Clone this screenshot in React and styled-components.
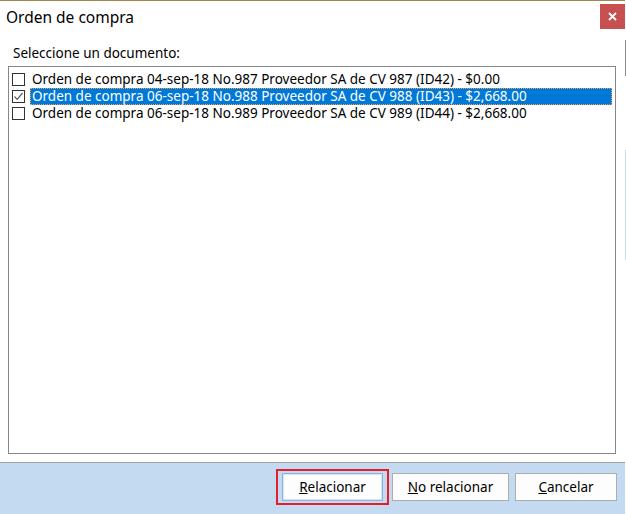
import React from "react";
import styled, { createGlobalStyle } from "styled-components";

const GlobalStyle = createGlobalStyle`
  html, body {
    margin: 0;
    padding: 0;
    background: #ffffff;
  }
  body {
    font-family: "Noto Sans", "Open Sans", "Liberation Sans", sans-serif;
  }
`;

const Screen = styled.div`
  width: 626px;
  height: 514px;
  display: flex;
  overflow: hidden;
`;

const Dialog = styled.div`
  flex: 1;
  display: flex;
  flex-direction: column;
  background: #ffffff;
  border-top: 1px solid #a3874f;
`;

const Behind = styled.div`
  width: 1px;
  background: linear-gradient(
    to bottom,
    #ffffff 0px,
    #ffffff 40px,
    #8a8a8a 40px,
    #8a8a8a 76px,
    #ffffff 76px,
    #ffffff 150px,
    #c9dcef 150px,
    #c9dcef 260px,
    #ffffff 260px
  );
`;

const TitleBar = styled.div`
  height: 32px;
  display: flex;
  align-items: flex-start;
  justify-content: space-between;
`;

const Title = styled.div`
  font-size: 15.5px;
  color: #000000;
  padding: 6px 0 0 6px;
  line-height: 20px;
`;

const CloseButton = styled.div`
  width: 25px;
  height: 25px;
  margin-top: 3px;
  background: #c75050;
  display: flex;
  align-items: center;
  justify-content: center;
`;

const Body = styled.div`
  flex: 1;
  display: flex;
  flex-direction: column;
  padding: 0 9px 8px 8px;
`;

const Label = styled.div`
  font-size: 13.5px;
  line-height: 16px;
  margin: 12px 0 5px 5px;
  color: #000000;
`;

const ListBox = styled.div`
  flex: 1;
  border: 1px solid #828790;
  padding-top: 4px;
  background: #ffffff;
`;

const Row = styled.div`
  height: 17px;
  display: flex;
  align-items: center;
`;

const Box = styled.div`
  width: 13px;
  height: 13px;
  box-sizing: border-box;
  margin: 0 5px 0 3px;
  border: 1px solid #333333;
  background: #ffffff;
  display: flex;
  align-items: center;
  justify-content: center;
`;

const ItemText = styled.div`
  flex: 1;
  height: 17px;
  margin-right: 3px;
  padding-left: 2px;
  font-size: 13.5px;
  line-height: 17px;
  white-space: nowrap;
  color: ${({ $selected }) => ($selected ? "#ffffff" : "#000000")};
  background: ${({ $selected }) => ($selected ? "#0078d7" : "transparent")};
  outline: ${({ $selected }) => ($selected ? "1px dotted #f0a04a" : "none")};
  outline-offset: -1px;
`;

const Footer = styled.div`
  height: 52px;
  box-sizing: border-box;
  border-top: 1px solid #a0a0a0;
  background: #c4daf0;
  display: flex;
  align-items: flex-start;
  justify-content: flex-end;
  gap: 6px;
  padding: 6px 8px 0 0;
`;

const Highlight = styled.div`
  border: 2px solid #e61e2b;
  padding: 2px 4px;
  margin-right: -3px;
`;

const Button = styled.div`
  width: ${({ $w }) => $w}px;
  height: 28px;
  box-sizing: border-box;
  margin-top: ${({ $inset }) => ($inset ? 0 : 4)}px;
  border: 1px solid ${({ $default }) => ($default ? "#86b3e2" : "#adadad")};
  box-shadow: ${({ $default }) => ($default ? "inset 0 0 0 1px #d6e6f7" : "none")};
  background: #fdfdfd;
  display: flex;
  align-items: center;
  justify-content: center;
  font-size: 13.5px;
  color: #000000;
`;

const U = styled.span`
  text-decoration: underline;
`;

const Check = () => (
  <svg width="11" height="11" viewBox="0 0 11 11">
    <path d="M1.5 5.5 L4.2 8.3 L9.5 2" fill="none" stroke="#5a5a5a" strokeWidth="1.2" />
  </svg>
);

const items = [
  { text: "Orden de compra 04-sep-18 No.987 Proveedor SA de CV 987 (ID42) - $0.00", checked: false },
  { text: "Orden de compra 06-sep-18 No.988 Proveedor SA de CV 988 (ID43) - $2,668.00", checked: true },
  { text: "Orden de compra 06-sep-18 No.989 Proveedor SA de CV 989 (ID44) - $2,668.00", checked: false },
];

export default function App() {
  return (
    <>
      <GlobalStyle />
      <Screen>
        <Dialog>
          <TitleBar>
            <Title>Orden de compra</Title>
            <CloseButton>
              <svg width="9" height="9" viewBox="0 0 9 9">
                <path d="M1 1 L8 8 M8 1 L1 8" stroke="#ffffff" strokeWidth="1.8" />
              </svg>
            </CloseButton>
          </TitleBar>
          <Body>
            <Label>Seleccione un documento:</Label>
            <ListBox>
              {items.map((it) => (
                <Row key={it.text}>
                  <Box>{it.checked && <Check />}</Box>
                  <ItemText $selected={it.checked}>{it.text}</ItemText>
                </Row>
              ))}
            </ListBox>
          </Body>
          <Footer>
            <Highlight>
              <Button $w={101} $default $inset>
                <span><U>R</U>elacionar</span>
              </Button>
            </Highlight>
            <Button $w={117}>
              <span><U>N</U>o relacionar</span>
            </Button>
            <Button $w={102}>
              <span><U>C</U>ancelar</span>
            </Button>
          </Footer>
        </Dialog>
        <Behind />
      </Screen>
    </>
  );
}
